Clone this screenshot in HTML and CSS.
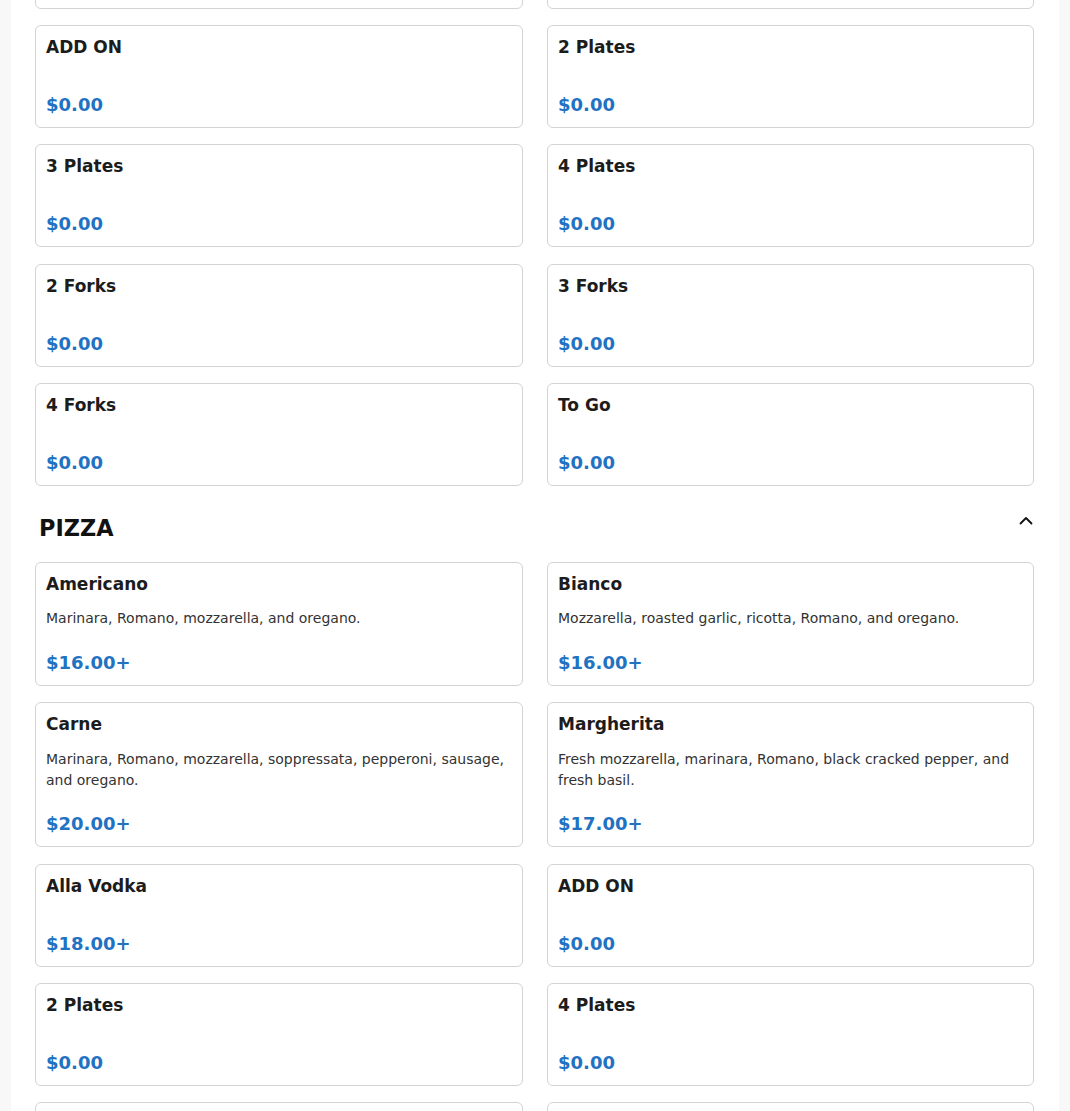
FILE: index.html
```html
<!DOCTYPE html>
<html lang="en">
<head>
<meta charset="utf-8">
<title>Menu</title>
<link rel="stylesheet" href="styles.css">
</head>
<body>
<main class="page">
  <section class="section section-prev">
    <div class="grid">
      <div class="card"><h3 class="card-title">1 Plate</h3><p class="card-desc"></p><div class="card-price">$0.00</div></div>
      <div class="card"><h3 class="card-title">1 Fork</h3><p class="card-desc"></p><div class="card-price">$0.00</div></div>
      <div class="card"><h3 class="card-title">ADD ON</h3><p class="card-desc"></p><div class="card-price">$0.00</div></div>
      <div class="card"><h3 class="card-title">2 Plates</h3><p class="card-desc"></p><div class="card-price">$0.00</div></div>
      <div class="card"><h3 class="card-title">3 Plates</h3><p class="card-desc"></p><div class="card-price">$0.00</div></div>
      <div class="card"><h3 class="card-title">4 Plates</h3><p class="card-desc"></p><div class="card-price">$0.00</div></div>
      <div class="card"><h3 class="card-title">2 Forks</h3><p class="card-desc"></p><div class="card-price">$0.00</div></div>
      <div class="card"><h3 class="card-title">3 Forks</h3><p class="card-desc"></p><div class="card-price">$0.00</div></div>
      <div class="card"><h3 class="card-title">4 Forks</h3><p class="card-desc"></p><div class="card-price">$0.00</div></div>
      <div class="card"><h3 class="card-title">To Go</h3><p class="card-desc"></p><div class="card-price">$0.00</div></div>
    </div>
  </section>

  <section class="section">
    <div class="section-head">
      <h2 class="section-title">PIZZA</h2>
      <svg class="chevron" width="16" height="16" viewBox="0 0 16 16" aria-hidden="true"><polyline points="2.5,10.5 8,5 13.5,10.5" fill="none" stroke="#111" stroke-width="1.8" stroke-linecap="round" stroke-linejoin="round"/></svg>
    </div>
    <div class="grid">
      <div class="card"><h3 class="card-title">Americano</h3><p class="card-desc">Marinara, Romano, mozzarella, and oregano.</p><div class="card-price">$16.00+</div></div>
      <div class="card"><h3 class="card-title">Bianco</h3><p class="card-desc">Mozzarella, roasted garlic, ricotta, Romano, and oregano.</p><div class="card-price">$16.00+</div></div>
      <div class="card"><h3 class="card-title">Carne</h3><p class="card-desc">Marinara, Romano, mozzarella, soppressata, pepperoni, sausage, and oregano.</p><div class="card-price">$20.00+</div></div>
      <div class="card"><h3 class="card-title">Margherita</h3><p class="card-desc">Fresh mozzarella, marinara, Romano, black cracked pepper, and fresh basil.</p><div class="card-price">$17.00+</div></div>
      <div class="card"><h3 class="card-title">Alla Vodka</h3><p class="card-desc"></p><div class="card-price">$18.00+</div></div>
      <div class="card"><h3 class="card-title">ADD ON</h3><p class="card-desc"></p><div class="card-price">$0.00</div></div>
      <div class="card"><h3 class="card-title">2 Plates</h3><p class="card-desc"></p><div class="card-price">$0.00</div></div>
      <div class="card"><h3 class="card-title">4 Plates</h3><p class="card-desc"></p><div class="card-price">$0.00</div></div>
      <div class="card"><h3 class="card-title">2 Forks</h3><p class="card-desc"></p><div class="card-price">$0.00</div></div>
      <div class="card"><h3 class="card-title">4 Forks</h3><p class="card-desc"></p><div class="card-price">$0.00</div></div>
    </div>
  </section>
</main>
</body>
</html>
```

FILE: styles.css
```css
* { box-sizing: border-box; }

html, body {
  margin: 0;
  padding: 0;
}

body {
  background: #f8f8f8;
  font-family: "DejaVu Sans", Verdana, sans-serif;
  color: #1a1a1a;
  overflow: hidden;
}

.page {
  margin: 0 11px;
  background: #ffffff;
  padding: 0 25px 40px 24px;
  min-height: 1300px;
}

.section-prev {
  margin-top: -94.33px;
}

.grid {
  display: grid;
  grid-template-columns: 488px 487px;
  column-gap: 24px;
  row-gap: 16.33px;
}

.card {
  display: flex;
  flex-direction: column;
  border: 1px solid #d3d3d3;
  border-radius: 6px;
  padding: 9px 10px 9px 10px;
  background: #fff;
}

.card-title {
  margin: 0;
  font-size: 17px;
  line-height: 24px;
  font-weight: bold;
  color: #1c1c1c;
}

.card-desc {
  margin: 12.5px 0 0 0;
  font-size: 14px;
  line-height: 21px;
  color: #333333;
}

.card-price {
  margin-top: 19.5px;
  font-size: 18px;
  line-height: 27px;
  font-weight: bold;
  color: #2272c3;
}

.section-head {
  display: flex;
  justify-content: space-between;
  align-items: flex-start;
  margin: 24px 0 16px 0;
  padding-left: 4px;
}

.section-title {
  margin: 0;
  font-size: 22.4px;
  line-height: 36px;
  font-weight: bold;
  color: #111;
}

.chevron {
  margin-top: 3px;
  display: block;
}
```
